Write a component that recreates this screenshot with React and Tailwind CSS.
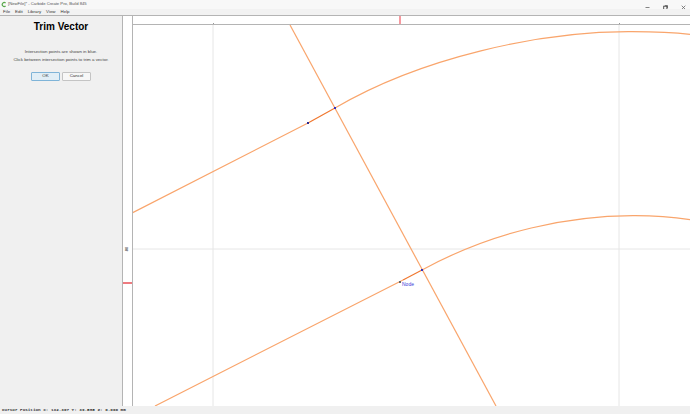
export default function App() {
  const font = { fontFamily: '"Liberation Sans", sans-serif' };
  return (
    <div className="w-[690px] h-[414px] flex flex-col overflow-hidden bg-white font-['Liberation_Sans',sans-serif] text-black">
      <div className="h-[9px] shrink-0 flex items-center bg-[#f8f8f8]">
        <svg width="6" height="7" viewBox="0 0 6 7" className="ml-[1px]">
          <path d="M4.6 2A2 2 0 1 0 4.6 5" fill="none" stroke="#5aa84a" strokeWidth="1.2" />
        </svg>
        <span className="ml-[1px] text-[4.2px] leading-none text-[#555]">[NewFile]* - Carbide Create Pro, Build 845</span>
        <div className="ml-auto flex items-center gap-[13px] mr-[4px] mt-[5px]">
          <svg width="5" height="5" viewBox="0 0 5 5"><path d="M0.5 2.5H4.5" stroke="#666" strokeWidth="0.8" /></svg>
          <svg width="5" height="5" viewBox="0 0 5 5"><rect x="0.7" y="1.2" width="3.2" height="3.2" fill="none" stroke="#444" strokeWidth="0.9" /><path d="M1.8 0.6H4.5V3.2" fill="none" stroke="#444" strokeWidth="0.7" /></svg>
          <svg width="5" height="5" viewBox="0 0 5 5"><path d="M0.7 0.7L4.3 4.3M4.3 0.7L0.7 4.3" stroke="#666" strokeWidth="0.8" /></svg>
        </div>
      </div>
      <div className="h-[6px] shrink-0 flex items-center gap-[5px] pl-[3px] text-[4.4px] leading-none text-[#333] bg-[#f2f2f2]">
        <span>File</span><span>Edit</span><span>Library</span><span>View</span><span>Help</span>
      </div>
      <div className="flex-1 flex min-h-0 border-t border-[#b4b4b4]">
        <aside className="w-[122px] shrink-0 bg-[#f0f0f0] flex flex-col items-center">
          <h1 className="mt-[5px] text-[10px] leading-[12px] font-bold">Trim Vector</h1>
          <p className="mt-[15px] text-[4.4px] leading-[8px] text-[#444] text-center whitespace-nowrap">
            Intersection points are shown in blue.<br />Click between intersection points to trim a vector.
          </p>
          <div className="mt-[8px] flex gap-[2px]">
            <button className="w-[29px] h-[9px] bg-[#e1eef6] border border-[#7fb4d8] rounded-[1px] text-[4.4px] leading-none text-[#333]">OK</button>
            <button className="w-[29px] h-[9px] bg-[#f7f7f7] border border-[#c4c4c4] rounded-[1px] text-[4.4px] leading-none text-[#333]">Cancel</button>
          </div>
        </aside>
        <div className="w-[11px] shrink-0 bg-white border-x border-[#b4b4b4] relative">
          <span className="absolute left-[2px] top-[231px] text-[4px] font-bold leading-none text-[#555] -rotate-90">80</span>
          <div className="absolute left-0 right-0 top-[266px] h-[2px] bg-[#ee7b80]" />
        </div>
        <div className="flex-1 flex flex-col min-w-0">
          <div className="h-[9px] shrink-0 bg-white border-b border-[#b4b4b4] relative">
            <div className="absolute left-[266px] top-0 bottom-0 w-[2px] bg-[#f79aa0]" />
            <div className="absolute left-[80px] bottom-0 w-[1px] h-[1px] bg-[#999]" />
            <div className="absolute left-[486px] bottom-0 w-[1px] h-[1px] bg-[#999]" />
          </div>
          <svg viewBox="133 25 557 381" className="flex-1 w-full min-h-0 block">
            <path d="M213 25V406M619 25V406M133 249H690" stroke="#e6e6e6" strokeWidth="1" fill="none" />
            <g fill="none" stroke="#f9a56c" strokeWidth="1.2">
              <path d="M290 25L496 406" />
              <path d="M132 213L308 123M335 108C420 58 540 31 632 31.7C652 31.9 672 32.5 690 34.3" />
              <path d="M155 406L403 280M422 270C495 230 570 216 633 215.7C653 215.6 672 217 690 219.7" />
            </g>
            <g fill="none" stroke="#f0772f" strokeWidth="1.2">
              <path d="M308 123L335 108" />
              <path d="M403 280L422 270" />
            </g>
            <rect x="334" y="107" width="2" height="2" fill="#3030c0" />
            <rect x="307" y="122" width="2" height="2" fill="#2a2a90" />
            <rect x="421" y="269" width="2" height="2" fill="#3030c0" />
            <rect x="399" y="281" width="2" height="2" fill="#666" />
            <text x="402" y="286" fontSize="5" fill="#3a3ad8" style={font}>Node</text>
          </svg>
        </div>
      </div>
      <div className="h-[8px] shrink-0 bg-[#f0f0f0] flex items-center pl-[2px] font-['Liberation_Mono',monospace] font-bold text-[4.3px] leading-none text-[#333] whitespace-pre">
        Cursor Position X: 132.307 Y: 39.585 Z: 0.000 mm
      </div>
    </div>
  );
}
